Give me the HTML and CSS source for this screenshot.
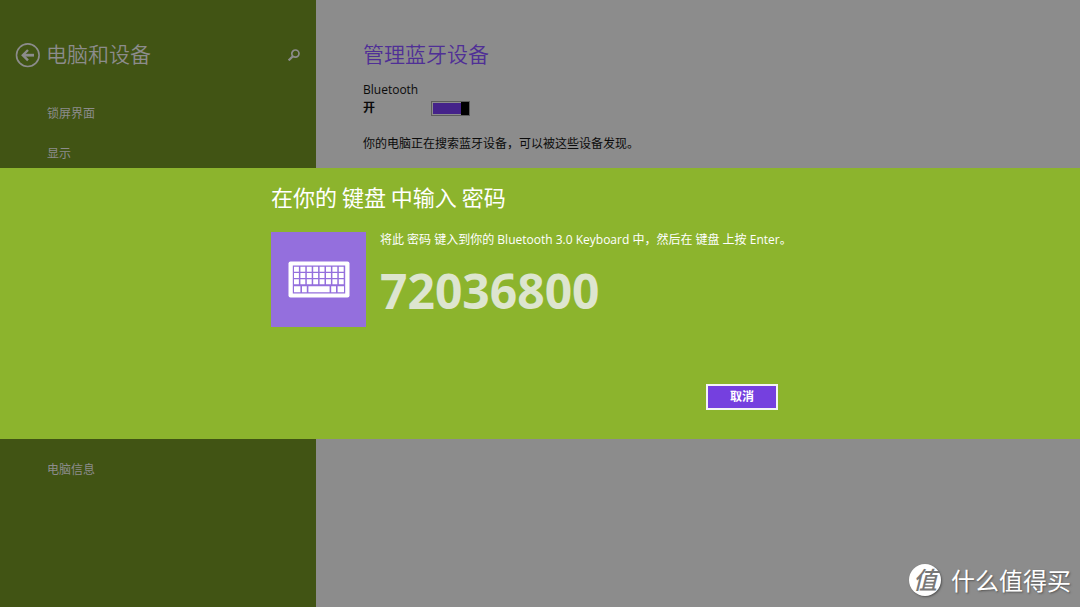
FILE: index.html
```html
<!DOCTYPE html>
<html lang="zh-CN">
<head>
<meta charset="utf-8">
<meta name="viewport" content="width=device-width, initial-scale=1">
<title>电脑和设备</title>
<link rel="stylesheet" href="styles.css">
</head>
<body>
<div class="screen">
  <aside class="sidebar">
    <header class="sidebar-header">
      <button class="icon-button" type="button" aria-label="返回">
        <svg width="26" height="26" viewBox="0 0 26 26" fill="none" stroke="currentColor">
          <circle cx="12.8" cy="13.2" r="11.3" stroke-width="1.6"/>
          <path d="M19 13.2H8" stroke-width="2.8"/>
          <path d="M13 8L7.8 13.2l5.2 5.2" stroke-width="2.4"/>
        </svg>
      </button>
      <h1 class="sidebar-title">电脑和设备</h1>
      <button class="icon-button search" type="button" aria-label="搜索">
        <svg width="12" height="12" viewBox="0 0 12 12" fill="none" stroke="currentColor">
          <circle cx="7.4" cy="4.6" r="3.6" stroke-width="1.7"/>
          <path d="M5 7.1L.6 11.4" stroke-width="2.2"/>
        </svg>
      </button>
    </header>
    <nav class="nav">
      <a class="nav-link" href="#lock">锁屏界面</a>
      <a class="nav-link" href="#display">显示</a>
      <a class="nav-link nav-last" href="#info">电脑信息</a>
    </nav>
  </aside>
  <main class="content">
    <h2 class="content-title">管理蓝牙设备</h2>
    <label class="setting-label" for="bluetooth">Bluetooth</label>
    <div class="setting-row">
      <span class="setting-state">开</span>
      <input class="toggle" id="bluetooth" type="checkbox" role="switch" checked>
    </div>
    <p class="setting-note">你的电脑正在搜索蓝牙设备，可以被这些设备发现。</p>
  </main>

  <section class="dialog" role="dialog" aria-modal="true" aria-labelledby="dialog-title">
    <div class="dialog-body">
      <h2 class="dialog-title" id="dialog-title">在你的 键盘 中输入 密码</h2>
      <div class="device">
        <div class="device-tile">
          <svg width="62" height="37" viewBox="0 0 62 37">
            <rect x="0.5" y="0.5" width="61" height="36" rx="2" fill="#fff"/>
            <rect x="4.8" y="4.5" width="52.4" height="28" fill="#946fdd"/>
            <g stroke="#fff" stroke-width="5" fill="none">
              <path d="M6 8.2H56M6 14.5H56M6 20.8H56" stroke-dasharray="4.9 1.5"/>
              <path d="M6 28.2h6.4M14 28.2h4.8M20.4 28.2h21.2M43.2 28.2h4.8M49.6 28.2h6.4" stroke-width="6"/>
            </g>
          </svg>
        </div>
        <div class="device-text">
          <p class="instruction">将此 密码 键入到你的 Bluetooth 3.0 Keyboard 中，然后在 键盘 上按 Enter。</p>
          <p class="passcode">72036800</p>
        </div>
      </div>
      <div class="actions">
        <button class="cancel" type="button">取消</button>
      </div>
    </div>
  </section>

  <div class="watermark">
    <span class="watermark-badge">值</span>
    <span>什么值得买</span>
  </div>
</div>
</body>
</html>
```
FILE: styles.css
```css
* {
  box-sizing: border-box;
}

body,
h1,
h2,
p {
  margin: 0;
}

body {
  font-family: "Open Sans", "Noto Sans CJK SC", sans-serif;
  font-size: 12px;
  line-height: 18px;
  color: #0b0b0b;
}

button {
  font: inherit;
}

.screen {
  position: relative;
  display: flex;
  min-height: 100vh;
  overflow: hidden;
  background: #8c8c8c;
}

.sidebar {
  width: 316px;
  flex: none;
  padding-top: 39px;
  background: #415414;
  color: #8c8c8c;
}

.sidebar-header {
  display: flex;
  align-items: center;
  gap: 5px;
  height: 32px;
  padding: 0 16px 0 15px;
}

.icon-button {
  display: flex;
  padding: 0;
  border: 0;
  background: none;
  color: inherit;
}

.search {
  margin-left: auto;
}

.sidebar-title,
.content-title {
  padding-bottom: 4px;
  font-family: "Noto Sans CJK SC", sans-serif;
  font-size: 21px;
  font-weight: 350;
  line-height: 28px;
}

.nav {
  display: flex;
  flex-direction: column;
  align-items: flex-start;
  gap: 22px;
  padding: 34px 47px;
}

.nav-link {
  color: inherit;
  text-decoration: none;
}

.nav-last {
  margin-top: 276px;
}

.content {
  flex: 1;
  padding: 39px 47px;
}

.content-title {
  color: #4f2f96;
}

.setting-label {
  display: block;
  margin-top: 10px;
}

.setting-row {
  display: flex;
  align-items: center;
}

.setting-state {
  width: 68px;
  font-weight: 700;
}

.toggle {
  appearance: none;
  width: 39px;
  height: 15px;
  margin: 0;
  border: 1px solid #5c5c5c;
  padding: 1px;
  background:
    linear-gradient(#000, #000) right / 9px 100% no-repeat border-box,
    #45238a content-box;
}

.setting-note {
  margin-top: 18px;
}

.dialog {
  position: absolute;
  top: 168px;
  left: 0;
  right: 0;
  padding: 12px 25% 29px;
  background: #8cb42d;
  color: #fff;
}

.dialog-body {
  padding-left: 1px;
}

.dialog-title {
  font-family: "Noto Sans CJK SC", sans-serif;
  font-size: 22px;
  font-weight: 400;
  line-height: 32px;
}

.device {
  display: flex;
  gap: 14px;
  margin-top: 20px;
}

.device-tile {
  display: flex;
  align-items: center;
  justify-content: center;
  width: 95px;
  height: 95px;
  flex: none;
  background: #946fdd;
}

.instruction {
  white-space: nowrap;
  line-height: 16px;
}

.passcode {
  margin-top: 15px;
  font-size: 48px;
  font-weight: 700;
  line-height: 56px;
  color: #dde5cf;
}

.actions {
  display: flex;
  justify-content: flex-end;
  margin-top: 57px;
  padding-right: 32px;
}

.cancel {
  width: 72px;
  height: 26px;
  padding: 0;
  border: 2px solid #f4f4f4;
  background: #7540df;
  color: #fff;
  font-weight: 700;
}

.watermark {
  position: absolute;
  right: 9px;
  bottom: 10px;
  display: flex;
  align-items: center;
  gap: 10px;
  font-family: "Noto Sans CJK SC", sans-serif;
  font-size: 24px;
  line-height: 34px;
  color: #fff;
  text-shadow: 1px 1px 2px #555;
}

.watermark-badge {
  width: 32px;
  height: 32px;
  border-radius: 50%;
  background: #fff;
  box-shadow: 1px 1px 2px #555;
  color: #777;
  font-style: italic;
  font-weight: 500;
  line-height: 30px;
  text-align: center;
  text-shadow: none;
}
```
